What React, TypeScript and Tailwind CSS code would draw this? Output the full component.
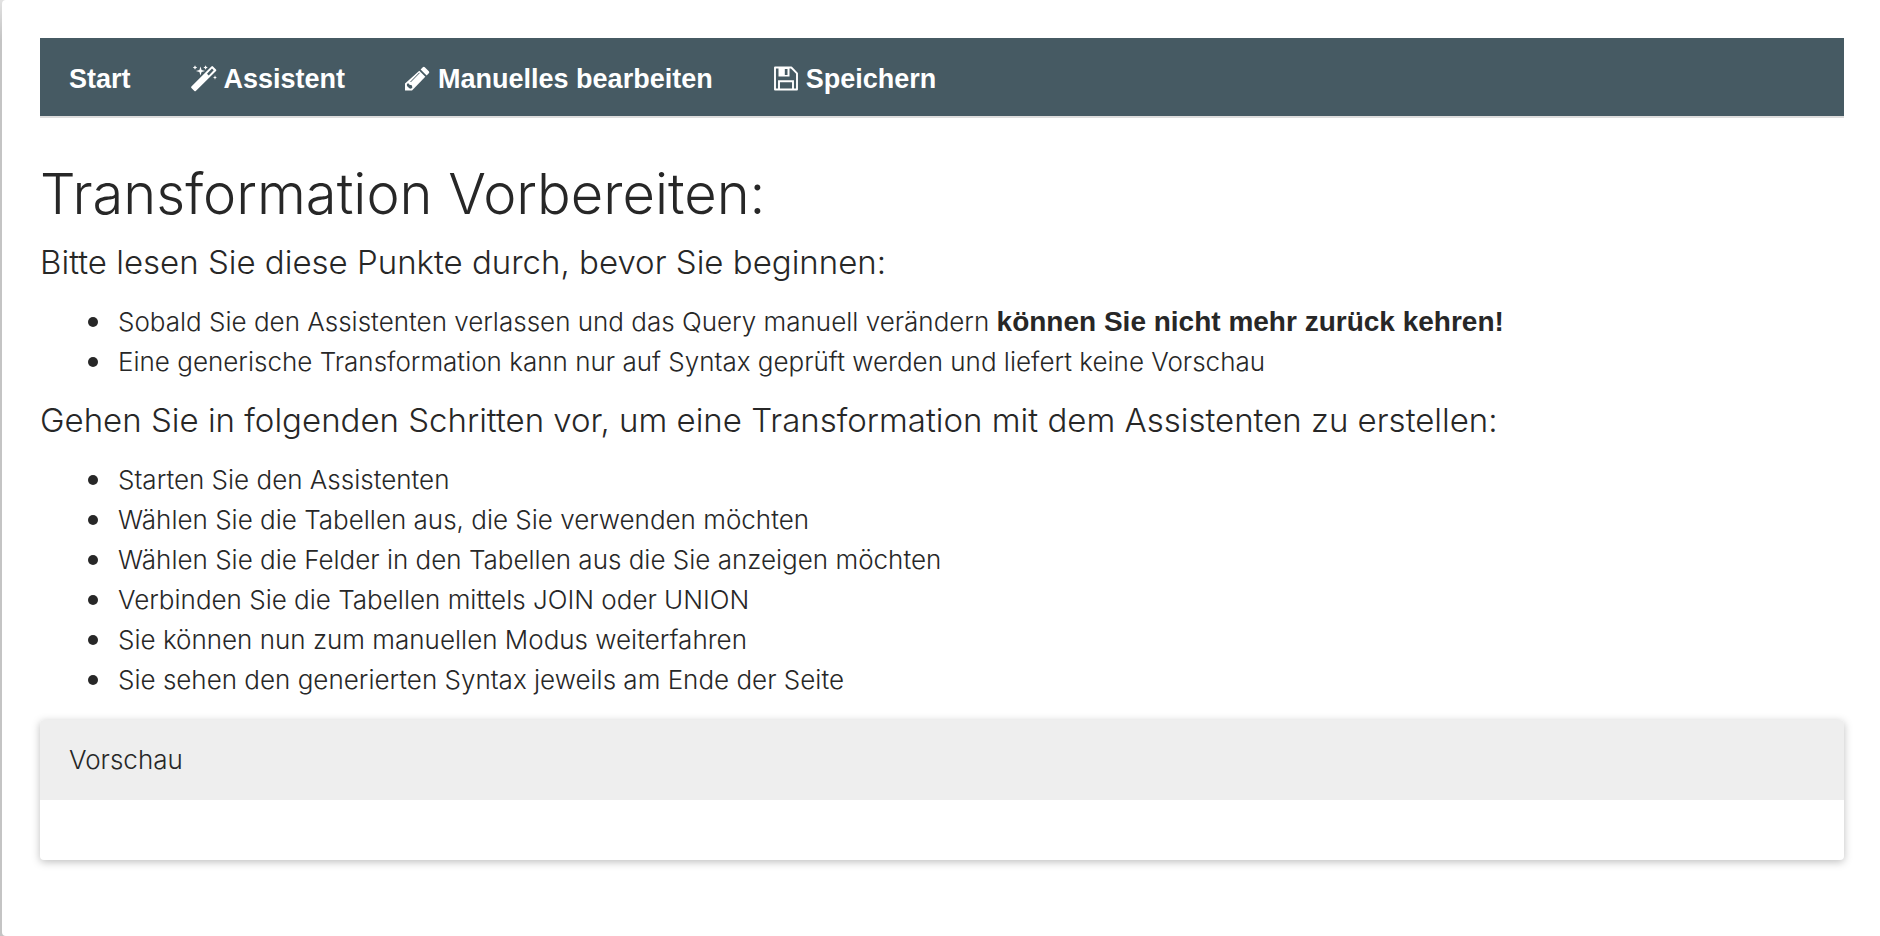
import type { ReactNode } from "react";

function WandIcon() {
  return (
    <svg viewBox="0 0 28 28" className="size-7" fill="currentColor" aria-hidden="true">
      <path
        fillRule="evenodd"
        d="M22.4 1.400q.8-.8 1.600 0l3 3q.8.8 0 1.600L6.800 25.900q-.7.700-1.400 0l-3-3q-.7-.7 0-1.400zM23 3.600l-5 5.100 1.700 1.700 5-5.100z"
      />
      <path d="M11.500 1.400l1.100 3.500 3.500 1.100-3.500 1.100-1.100 3.500-1.100-3.500L6.900 6l3.500-1.100z" />
      <path d="M6 .3l.7 1.500 1.500.7-1.500.7L6 4.700l-.7-1.500-1.500-.7 1.500-.7z" />
      <path d="M16.600.3l.7 1.500 1.500.7-1.500.7-.7 1.500-.7-1.500-1.500-.7 1.500-.7z" />
      <path d="M26 10.300l.6 1.600 1.400.6-1.400.6-.6 1.600-.6-1.600-1.500-.6 1.500-.6z" />
    </svg>
  );
}

function PencilIcon() {
  return (
    <svg viewBox="0 0 28 28" className="size-7" aria-hidden="true">
      <path fill="currentColor" d="M16.300 5.700l6 6L9 25.500H2v-7z" />
      <path fill="currentColor" d="M17.600 4.400l2.200-2.200q1-1 2 0l4 4q1 1 0 2l-2.200 2.200z" />
      <path stroke="#465a63" strokeWidth="1" fill="none" d="M7.500 17l9-9.200" />
      <path fill="#465a63" d="M5 18.100l1.500 1.700 2.300.5.600 2.200-1.400 1.200-1.700-.5-2.300-2.200-.2-1.500z" />
    </svg>
  );
}

function FloppyIcon() {
  return (
    <svg viewBox="0 0 28 28" className="size-7" fill="none" stroke="currentColor" aria-hidden="true">
      <path strokeWidth="1.900" strokeLinejoin="round" d="M4 2.500h16.300l5.700 5.800V24.500H4z" />
      <path strokeWidth="1.900" d="M8 24.500v-8.300h14v8.300" />
      <path fill="currentColor" stroke="none" fillRule="evenodd" d="M7.500 2.500h11v9h-11zM13.800 4v6h2.700V4z" />
    </svg>
  );
}

function NavItem({ icon, children }: { icon?: ReactNode; children: ReactNode }) {
  return (
    <a href="#" className="flex items-center gap-[7px] px-[29px]">
      {icon}
      <span>{children}</span>
    </a>
  );
}

function Points({ children }: { children: ReactNode }) {
  return <ul className="pl-12 pt-4 text-[26px] leading-10">{children}</ul>;
}

function Point({ children }: { children: ReactNode }) {
  return (
    <li className="flex items-center gap-5 before:size-2.5 before:shrink-0 before:rounded-full before:bg-[#272727]">
      <span>{children}</span>
    </li>
  );
}

export default function App() {
  return (
    <div className="min-h-screen bg-gradient-to-b from-[#e2e2e2] to-[#c4c4c4] to-[40px] pl-0.5">
      <main className="min-h-screen rounded-l bg-white py-[38px] pr-9 pl-[38px] font-['Inter','Liberation_Sans',sans-serif] font-light text-[#272727]">
        <nav className="flex min-h-20 flex-wrap items-stretch border-b-2 border-[#dddddd] bg-[#465a63] pt-1 font-['Liberation_Sans',sans-serif] text-[27px] font-bold text-white">
          <NavItem>Start</NavItem>
          <NavItem icon={<WandIcon />}>Assistent</NavItem>
          <NavItem icon={<PencilIcon />}>Manuelles bearbeiten</NavItem>
          <NavItem icon={<FloppyIcon />}>Speichern</NavItem>
        </nav>

        <h1 className="mt-10 text-[56px] leading-[72px]">Transformation Vorbereiten:</h1>

        <h2 className="mt-2 text-[33px] leading-[48px]">Bitte lesen Sie diese Punkte durch, bevor Sie beginnen:</h2>
        <Points>
          <Point>
            Sobald Sie den Assistenten verlassen und das Query manuell verändern{" "}
            <strong className="font-['Liberation_Sans',sans-serif] text-[28px] font-bold">
              können Sie nicht mehr zurück kehren!
            </strong>
          </Point>
          <Point>Eine generische Transformation kann nur auf Syntax geprüft werden und liefert keine Vorschau</Point>
        </Points>

        <h2 className="mt-3.5 text-[33px] leading-[48px]">
          Gehen Sie in folgenden Schritten vor, um eine Transformation mit dem Assistenten zu erstellen:
        </h2>
        <Points>
          <Point>Starten Sie den Assistenten</Point>
          <Point>Wählen Sie die Tabellen aus, die Sie verwenden möchten</Point>
          <Point>Wählen Sie die Felder in den Tabellen aus die Sie anzeigen möchten</Point>
          <Point>Verbinden Sie die Tabellen mittels JOIN oder UNION</Point>
          <Point>Sie können nun zum manuellen Modus weiterfahren</Point>
          <Point>Sie sehen den generierten Syntax jeweils am Ende der Seite</Point>
        </Points>

        <section className="mt-5 overflow-hidden rounded bg-white shadow-[0_2px_8px_rgba(0,0,0,0.26)]">
          <h3 className="bg-[#eeeeee] px-[29px] py-5 text-[26px] leading-10">Vorschau</h3>
          <div className="h-15" />
        </section>
      </main>
    </div>
  );
}
